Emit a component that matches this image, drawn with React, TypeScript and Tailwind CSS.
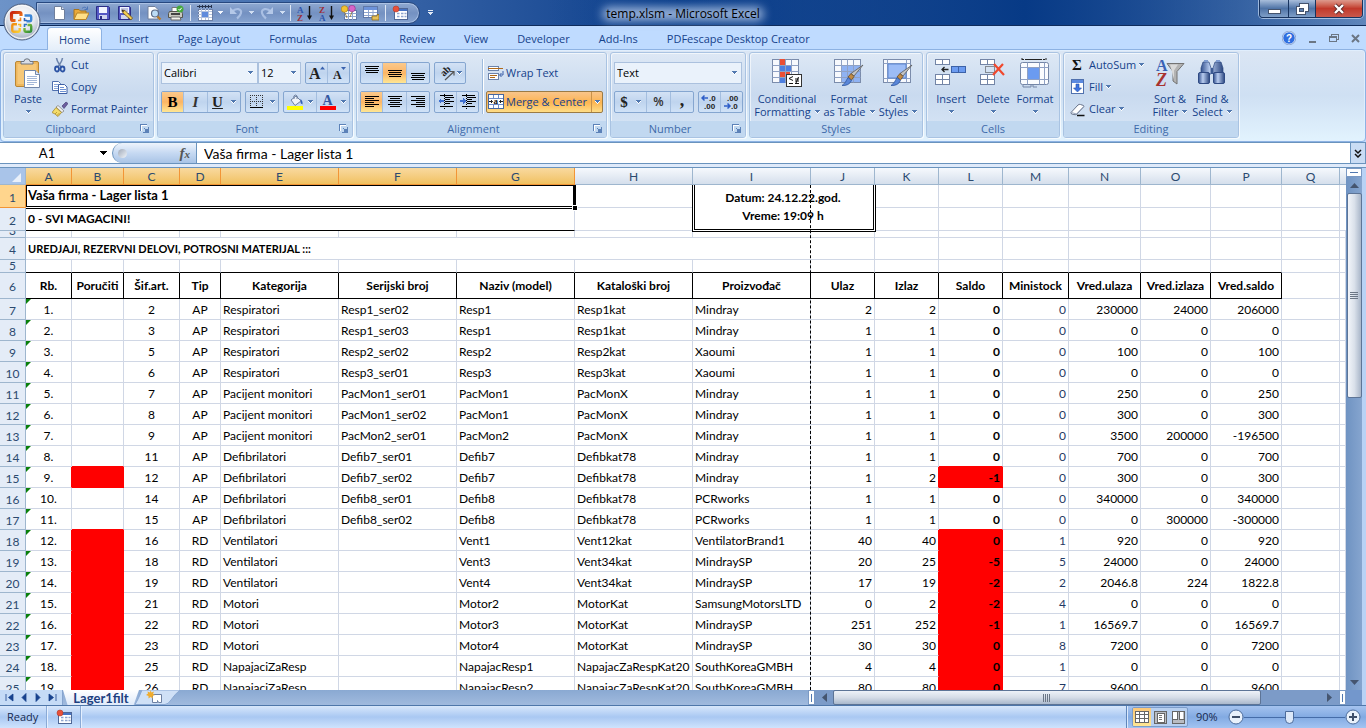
import React, { useState } from "react";
import type { ReactNode } from "react";

/* ---------- icons ---------- */

type SvgProps = { w?: number; h?: number; vb?: string; crisp?: boolean; children: ReactNode };

function Svg({ w = 16, h = 16, vb, crisp, children }: SvgProps) {
  return (
    <svg
      width={w}
      height={h}
      viewBox={vb ?? `0 0 ${w} ${h}`}
      fill="none"
      shapeRendering={crisp ? "crispEdges" : "auto"}
      className="block shrink-0"
      aria-hidden="true"
    >
      {children}
    </svg>
  );
}

function Arrow({ color = "#5279b0", shadow = true }: { color?: string; shadow?: boolean }) {
  return (
    <Svg w={5} h={4} crisp>
      {shadow && <path d="M0 1h5v1h-1v1h-1v1h-1v-1h-1v-1h-1z" fill="#fff" />}
      <path d="M0 0h5v1h-1v1h-1v1h-1v-1h-1v-1h-1z" fill={color} />
    </Svg>
  );
}

const NewIcon = () => (
  <Svg>
    <path d="M3.500 1.500h7l3 3v10h-10z" fill="#fff" stroke="#6f7f9c" />
    <path d="M10.500 1.500v3h3" fill="#dfe6f2" stroke="#6f7f9c" />
  </Svg>
);
const OpenIcon = () => (
  <Svg>
    <path d="M1 14V4.500h5l1.500 1.500H13V14z" fill="#e9a93a" stroke="#a8741c" />
    <path d="M1 14.500 4 8h12l-3 6.500z" fill="#ffdf87" stroke="#b98426" />
    <path d="M9 3.500c2-2 4-1.500 5 .5M14.500 1.500V4.500H11.500" stroke="#4b74b8" />
  </Svg>
);
const SaveIcon = () => (
  <Svg>
    <path d="M1.500 1.500h12l1 1v12h-13z" fill="#5558c4" stroke="#2b2e86" />
    <rect x="4" y="2" width="8" height="6" fill="#f2f5ff" />
    <rect x="4" y="10" width="8" height="4" fill="#cfd4ee" />
    <rect x="5" y="11" width="2" height="3" fill="#2b2e86" />
  </Svg>
);
const SaveAsIcon = () => (
  <Svg>
    <path d="M1.500 1.500h11l1 1v12h-12z" fill="#5558c4" stroke="#2b2e86" />
    <rect x="3" y="2" width="9" height="6" fill="#f2f5ff" />
    <path d="M4 4h7M4 6h7" stroke="#8d93c9" />
    <rect x="4" y="10" width="7" height="4" fill="#cfd4ee" />
    <path d="M5 5 6 8l8 7 1.500-2L8 5.500z" fill="#f3cf54" stroke="#6b4c12" strokeWidth=".8" />
    <path d="M4.500 4.500 6 7l1.500-1z" fill="#222" />
  </Svg>
);
const PreviewIcon = () => (
  <Svg>
    <path d="M2 1.500h7l3 3v9.500h-10z" fill="#fff" stroke="#6f7f9c" />
    <circle cx="9" cy="8.500" r="3.500" fill="#bcdcf5" stroke="#5a6a86" strokeWidth="1.200" />
    <path d="m11.500 11.500 3 3" stroke="#b87c2b" strokeWidth="2.400" />
  </Svg>
);
const PrintIcon = () => (
  <Svg>
    <path d="M4 6V2.500h7V6" fill="#fff" stroke="#777" />
    <path d="M1.500 6.500h12l1 2v4h-14v-4z" fill="#c9c9c0" stroke="#55554d" />
    <path d="M3 12h9l1 3H3z" fill="#f4f4ee" stroke="#666" />
    <path d="M3 9h9" stroke="#444" strokeWidth="2" />
    <circle cx="12" cy="4" r="3.500" fill="#45a83c" />
    <path d="m10.500 4 1.200 1.300 2-2.500" stroke="#fff" />
  </Svg>
);
const SelectTableIcon = () => (
  <Svg crisp>
    <path d="M0 1h15M2 0v3M5 0v3M8 0v3M11 0v3M14 0v3" stroke="#26334d" />
    <rect x="1" y="4" width="14" height="11" fill="#fff" stroke="#6b7fa6" />
    <path d="M1 6h14M1 9h14M1 12h14M4 4v11M8 4v11M11 4v11" stroke="#b4c3de" />
    <rect x="5" y="7" width="6" height="5" fill="#5f8bdc" />
  </Svg>
);
const UndoIcon = ({ flip = false }: { flip?: boolean }) => (
  <Svg>
    <g transform={flip ? "matrix(-1 0 0 1 16 0)" : undefined}>
      <path d="M4 7c4-5 10-3 9 1-.5 2.500-2 4-4 5.500" stroke="#a9bfe3" strokeWidth="2.200" />
      <path d="M2 2v7h7z" fill="#b4c8e8" />
    </g>
  </Svg>
);
const SortIcon = ({ a, b, ca, cb }: { a: string; b: string; ca: string; cb: string }) => (
  <Svg>
    <text x="0" y="7.500" fontSize="9" fontWeight="700" fontFamily="Liberation Serif, serif" fill={ca}>{a}</text>
    <text x="0" y="15.500" fontSize="9" fontWeight="700" fontFamily="Liberation Serif, serif" fill={cb}>{b}</text>
    <path d="M12.500 1v11" stroke="#111" strokeWidth="1.400" />
    <path d="M10 10.500h5l-2.500 4.500z" fill="#111" />
  </Svg>
);
const BalloonIcon = () => (
  <Svg>
    <rect x="3.500" y="5.500" width="12" height="9" fill="#fff" stroke="#5f78a8" />
    <path d="M3.500 8.500h12M3.500 11.500h12M7.500 6v9M11.500 6v9" stroke="#8ea5cf" />
    <circle cx="3.500" cy="4" r="3.300" fill="#f1c232" stroke="#a97b11" strokeWidth=".6" />
    <circle cx="11" cy="3.500" r="3.300" fill="#d764c8" stroke="#8c2d82" strokeWidth=".6" />
    <path d="m4 8 2 5M11 7l-2 5" stroke="#8a6b22" strokeWidth=".8" />
  </Svg>
);
const SheetIcon = () => (
  <Svg>
    <rect x=".5" y="1.500" width="14" height="11" fill="#fff" stroke="#5f78a8" />
    <rect x="1" y="2" width="13" height="3" fill="#6d93da" />
    <path d="M1 7.500h13M1 10.500h13M5.500 5v7M10 5v7" stroke="#8ea5cf" />
    <path d="M9 11h5v-1.500h2V15H9z" fill="#e6c15a" stroke="#8b6a1c" strokeWidth=".8" />
  </Svg>
);
const RecordIcon = () => (
  <Svg>
    <rect x="2.500" y="3.500" width="13" height="11" fill="#fff" stroke="#4f6796" />
    <rect x="3" y="4" width="12" height="2" fill="#4673c4" />
    <path d="M5 8.500h2.500M9 8.500h2.500M12.500 8.500h2M5 11.500h2.500M9 11.500h2.500M12.500 11.500h2" stroke="#8fa5cf" strokeWidth="1.500" />
    <circle cx="4" cy="4" r="3" fill="#e8503a" stroke="#b23a28" strokeWidth=".6" />
  </Svg>
);
const OfficeLogo = () => (
  <Svg w={40} h={40}>
    <defs>
      <radialGradient id="orb" cx=".5" cy=".35" r=".7">
        <stop offset="0" stopColor="#fff" />
        <stop offset=".5" stopColor="#e6e9ef" />
        <stop offset=".8" stopColor="#b4bdcd" />
        <stop offset="1" stopColor="#eef2f8" />
      </radialGradient>
      <linearGradient id="lr" x2="1" y2="1"><stop stopColor="#c8220e" /><stop offset="1" stopColor="#f58a1e" /></linearGradient>
      <linearGradient id="ly" x2="1" y2="1"><stop stopColor="#f08a12" /><stop offset="1" stopColor="#fbd032" /></linearGradient>
      <linearGradient id="lg" x2="1" y2="1"><stop stopColor="#8cc63a" /><stop offset="1" stopColor="#2f8f3a" /></linearGradient>
    </defs>
    <circle cx="20" cy="20" r="18" fill="url(#orb)" stroke="#4c5f80" />
    <circle cx="20" cy="20" r="16.500" stroke="#fff" strokeOpacity=".8" />
    <path d="M13.500 18.500H11q-1.500 0-1.500-1.500v-5q0-1.500 1.500-1.500h6.500q1.500 0 1.500 1.500v2" stroke="url(#lr)" strokeWidth="3.200" />
    <path d="M22.500 13.500h5.500q1.200 0 1.200 1.200v3.300q0 1.200-1.200 1.200h-3.500" stroke="#3d86d6" strokeWidth="2.400" />
    <path d="M15 22.200h-3.500q-1.200 0-1.200 1.200v5.200q0 1.200 1.200 1.200h5q1.200 0 1.200-1.200V26" stroke="url(#ly)" strokeWidth="2.400" />
    <path d="M22.500 26v2.500q0 1.200 1.200 1.200h4.300q1.200 0 1.200-1.200v-4.300q0-1.200-1.200-1.200h-2.500" stroke="url(#lg)" strokeWidth="2.400" />
    <path d="M18.500 15.500v3h-2.500" stroke="#f5861e" strokeWidth="1.600" />
    <path d="M22.500 16v2.500h2.500" stroke="#2b62b8" strokeWidth="1.600" />
    <path d="M16 22.500h2.500v2.500" stroke="#f5b623" strokeWidth="1.600" />
    <path d="M25 22.500h-2.500v2.500" stroke="#2d74c4" strokeWidth="1.600" />
  </Svg>
);

const PasteIcon = () => (
  <Svg w={28} h={32}>
    <rect x="1.500" y="3.500" width="23" height="25" rx="1.500" fill="#efb75c" stroke="#b98634" />
    <rect x="3.500" y="6" width="19" height="20" fill="#f6c878" />
    <path d="M7 6V3.500h3Q10 .8 13 .8t3 2.700h3V6z" fill="#d9dee6" stroke="#6c7480" />
    <path d="M10.500 12.500h11l4 4v13h-15z" fill="#fff" stroke="#7187ab" />
    <path d="M21.500 12.500v4h4" fill="#dfe8f6" stroke="#7187ab" />
    <path d="M13 18.500h10M13 20.500h10M13 22.500h10M13 24.500h10M13 26.500h7" stroke="#a3b7d8" />
  </Svg>
);
const CutIcon = () => (
  <Svg>
    <path d="M4.500 1c.5 4 3 6 4.500 9M10.500 1C10 5 7.500 7 6 10" stroke="#6f86ad" strokeWidth="1.600" />
    <ellipse cx="5" cy="12" rx="2" ry="2.500" stroke="#2c53a4" strokeWidth="1.800" />
    <ellipse cx="10.500" cy="12" rx="2" ry="2.500" stroke="#2c53a4" strokeWidth="1.800" />
  </Svg>
);
const CopyIcon = () => (
  <Svg>
    <path d="M.5 2.500h6l2 2v7h-8z" fill="#fff" stroke="#4f6fae" />
    <path d="M2 5.500h4M2 7.500h4M2 9.500h4" stroke="#8ba7da" />
    <path d="M6.500 5.500h6l2.500 2.500v6.500h-8.500z" fill="#fff" stroke="#3d5fa5" />
    <path d="M8 8.500h4M8 10.500h6M8 12.500h6" stroke="#6f92d3" />
  </Svg>
);
const PainterIcon = () => (
  <Svg>
    <path d="m10 5 4-4 2 1.500-4 5z" fill="#6d5e9e" stroke="#3d356b" strokeWidth=".6" />
    <path d="m6 4.500 6 5.500-2 1.500-6-5.500z" fill="#f2f2f2" stroke="#7a7a7a" strokeWidth=".7" />
    <path d="M4 6.500 9.500 11.500 6 15.500Q3 12.500 0 11.500z" fill="#f4dc6a" stroke="#9b7c22" strokeWidth=".7" />
    <path d="m3 13 2-2M5 14.500 7.500 12" stroke="#a88723" strokeWidth=".7" />
  </Svg>
);
const GrowIcon = ({ small = false }: { small?: boolean }) => (
  <Svg w={18}>
    <text x={small ? 3 : 1} y="14" fontSize={small ? 12 : 16} fontWeight="700" fontFamily="Liberation Serif, serif" fill="#222">A</text>
    <path d={small ? "M11 2h5l-2.500 3z" : "M12 4.500h5l-2.500-3z"} fill="#3a62ae" />
  </Svg>
);
const BordersIcon = () => (
  <Svg crisp w={14} h={14}>
    <path d="M.5 0v12M6.500 0v12M12.500 0v12M0 .5h13M0 6.500h13" stroke="#333" strokeDasharray="1 1" />
    <path d="M0 12.500h13" stroke="#000" strokeWidth="1" />
  </Svg>
);
const FillIcon = () => (
  <Svg w={17}>
    <path d="m4 6 5-4 5 5-6 4.500z" fill="#eef2f8" stroke="#6d7f9e" />
    <path d="M7 5q-1-4 1.500-4T10 5" stroke="#6d7f9e" />
    <path d="M13 5q3 1 2.500 5.500Q12.500 9 14 7z" fill="#2f5fb8" />
    <rect x="0" y="12" width="16" height="4" fill="#ff0" />
  </Svg>
);
const FontColorIcon = () => (
  <Svg w={17}>
    <text x="2.500" y="11" fontSize="14" fontWeight="700" fontFamily="Liberation Serif, serif" fill="#34579f">A</text>
    <rect x="0" y="12" width="16" height="4" fill="#f00" />
  </Svg>
);

function Lines({ rows }: { rows: [number, number, number][] }) {
  return (
    <Svg crisp>
      {rows.map(([y, x, w]) => (
        <rect key={y} x={x} y={y} width={w} height={1} fill="#000" />
      ))}
    </Svg>
  );
}
const TopIcon = () => <Lines rows={[[1, 1, 14], [3, 2, 12], [5, 1, 14], [7, 2, 12]]} />;
const MiddleIcon = () => <Lines rows={[[5, 1, 14], [7, 2, 12], [9, 1, 14], [11, 2, 12]]} />;
const BottomIcon = () => <Lines rows={[[8, 1, 14], [10, 2, 12], [12, 1, 14], [14, 2, 12]]} />;
const LeftIcon = () => <Lines rows={[[2, 1, 14], [4, 1, 9], [6, 1, 14], [8, 1, 9], [10, 1, 14], [12, 1, 9]]} />;
const CenterIcon = () => <Lines rows={[[2, 1, 14], [4, 3, 10], [6, 1, 14], [8, 3, 10], [10, 1, 14], [12, 3, 10]]} />;
const RightIcon = () => <Lines rows={[[2, 1, 14], [4, 6, 9], [6, 1, 14], [8, 6, 9], [10, 1, 14], [12, 6, 9]]} />;
const IndentIcon = ({ out = false }: { out?: boolean }) => (
  <Svg crisp>
    <path d="M7 3.500h9M7 5.500h5M7 7.500h9M7 9.500h5M2 12.500h13M2 1.500h13" stroke="#000" />
    <path d="M6.500 0v16" stroke="#000" strokeDasharray="1 1" />
    <path d={out ? "M0 7 3 4v2h3v2H3v2z" : "M6 7 3 4v2H0v2h3v2z"} fill="#3f6fd0" />
  </Svg>
);
const OrientIcon = () => (
  <Svg>
    <text x="0" y="0" fontSize="10" fontWeight="700" fontFamily="Liberation Serif, serif" fill="#222" transform="translate(5 12) rotate(-45)">ab</text>
    <path d="m6 15 8.500-8M11 6.500H15V10.500" stroke="#555" strokeWidth="1.200" />
  </Svg>
);
const WrapIcon = () => (
  <Svg>
    <rect x=".5" y="1.500" width="10" height="4" fill="#fff" stroke="#6c83ab" />
    <path d="M0 3.500h15" stroke="#b06a1a" strokeWidth="1.200" />
    <rect x=".5" y="8.500" width="10" height="6" fill="#fff" stroke="#6c83ab" />
    <path d="M2 10.500h7M2 12.500h5" stroke="#b06a1a" />
    <path d="M15 6v4h-3M13.500 8 11.500 10l2 2" stroke="#3a5fa8" />
  </Svg>
);
const MergeIcon = () => (
  <Svg>
    <rect x=".5" y=".5" width="15" height="14" fill="#fff" stroke="#47679f" />
    <path d="M1 4.500h14M1 10.500h14M5.500 1v3M10.500 1v3M5.500 11v3M10.500 11v3" stroke="#6d8dc9" />
    <path d="M1 7.500h3.500M11.500 7.500H15M3 6l1.500 1.500L3 9M13 6l-1.500 1.500L13 9" stroke="#222" />
    <text x="5.500" y="10" fontSize="9" fontWeight="700" fontFamily="Liberation Serif, serif" fill="#111">a</text>
  </Svg>
);
const DecimalIcon = ({ dec = false }: { dec?: boolean }) => (
  <Svg w={17}>
    <text x={dec ? 4 : 8} y="7" fontSize="8" fontWeight="700" fontFamily="Liberation Sans, sans-serif" fill="#222">{dec ? ".00" : ".0"}</text>
    <text x={dec ? 8 : 3} y="15" fontSize="8" fontWeight="700" fontFamily="Liberation Sans, sans-serif" fill="#222">{dec ? ".0" : ".00"}</text>
    <path d={dec ? "M1 12h6M4.500 9.500 7 12l-2.500 2.500" : "M7 4H1M3.500 1.500 1 4l2.500 2.500"} stroke="#2f5fc8" strokeWidth="1.500" />
  </Svg>
);

const Grid = ({ children }: { children?: ReactNode }) => (
  <>
    <rect x="1.500" y="1.500" width="26" height="23" fill="#f7f9fd" stroke="#7b8cab" />
    {children}
    <path d="M1.500 7.500h26M1.500 13.500h26M1.500 19.500h26M8.500 1.500v23M14.500 1.500v23M20.500 1.500v23" stroke="#8fa1c4" />
  </>
);
const Brush = () => (
  <g>
    <path d="m30 7-9 11-3-2.500z" fill="#c4c4c4" stroke="#5c5c5c" strokeWidth=".8" />
    <path d="m18 15.500 3 3-2.500 3.500-3.500-3z" fill="#c08a45" stroke="#6d4b1d" strokeWidth=".8" />
    <path d="M15 19.500 18.500 22.500Q16 28 9 27.500q3.500-2 6-8z" fill="#5a86d8" stroke="#2c559f" strokeWidth=".8" />
  </g>
);
const CondIcon = () => (
  <Svg w={32} h={32}>
    <Grid>
      <rect x="8" y="1" width="6" height="6" fill="#ea4f35" />
      <rect x="8" y="8" width="12" height="6" fill="#4d7fe0" />
      <rect x="8" y="14" width="11" height="6" fill="#ea4f35" />
      <rect x="8" y="20" width="6" height="5" fill="#4d7fe0" />
    </Grid>
    <rect x="15.500" y="16.500" width="15" height="12" fill="#fff" stroke="#333" />
    <path d="m22 18.500-4 2 4 2M18 25.500h4M24 21h4M24 23h4M27.500 19 25 25M24 25.500h4" stroke="#111" />
  </Svg>
);
const FormatTableIcon = () => (
  <Svg w={32} h={32}>
    <Grid>
      <rect x="8" y="8" width="19" height="16" fill="#8fb2f3" />
    </Grid>
    <Brush />
  </Svg>
);
const CellStylesIcon = () => (
  <Svg w={32} h={32}>
    <rect x="1.500" y="1.500" width="27" height="23" fill="#f7f9fd" stroke="#7b8cab" />
    <path d="M1.500 5.500h27M1.500 20.500h27M5.500 1.500v23M24.500 1.500v23" stroke="#8fa1c4" />
    <rect x="6" y="6" width="18" height="14" fill="#9cbcf6" stroke="#5d86cf" />
    <Brush />
  </Svg>
);
const CellBlock = ({ x, y, h = 11 }: { x: number; y: number; h?: number }) => (
  <g stroke="#7385a6">
    <rect x={x} y={y} width="14" height={h} fill="#fff" />
    <path d={h > 6 ? `M${x + 7} ${y}v${h}M${x} ${y + 5}h14` : `M${x + 7} ${y}v${h}`} />
  </g>
);
const InsertIcon = () => (
  <Svg w={32} h={32}>
    <CellBlock x={0.5} y={1.5} h={5} />
    <CellBlock x={0.5} y={16.5} h={10} />
    <rect x="16.500" y="8.500" width="14" height="6" fill="#6b9bf0" stroke="#3c62a8" />
    <path d="M23.500 8.500v6" stroke="#3c62a8" />
    <path d="M13.500 11.500H7M9.500 9 7 11.500 9.500 14" stroke="#222" strokeWidth="1.300" />
  </Svg>
);
const DeleteIcon = () => (
  <Svg w={32} h={32}>
    <CellBlock x={3.5} y={1.5} h={5} />
    <CellBlock x={3.5} y={16.5} h={10} />
    <path d="M8.500 8.500h9v6h-9z" stroke="#333" strokeDasharray="1 1" />
    <path d="m17 6 10 11M26 6 16 17" stroke="#f0492e" strokeWidth="2.200" />
  </Svg>
);
const FormatIcon = () => (
  <Svg w={32} h={32}>
    <path d="M3 1.500h24M3 0v3M27 0v3" stroke="#222" strokeDasharray="2 1" />
    <path d="M8 1.500h14" stroke="#222" />
    <rect x="1.500" y="4.500" width="28" height="22" rx="2" fill="#fafcff" stroke="#7385a6" />
    <path d="M1.500 9.500h28M1.500 21.500h28M8.500 4.500v22M20.500 4.500v22M25.500 4.500v22" stroke="#8fa1c4" />
    <rect x="9" y="10" width="11" height="11" fill="#6b9bf0" />
    <path d="M4 27v2h8v-2M14 27v2h4" stroke="#7385a6" />
  </Svg>
);
const SigmaIcon = () => (
  <Svg>
    <text x="2" y="13" fontSize="15" fontWeight="700" fontFamily="Liberation Serif, serif" fill="#111">Σ</text>
  </Svg>
);
const FillDownIcon = () => (
  <Svg>
    <rect x="1.500" y=".5" width="12" height="14" fill="#fff" stroke="#5071ae" />
    <rect x="2" y="1" width="11" height="3" fill="#5c8ae0" />
    <path d="M6 5h3v4h2.500L7.500 13 3.500 9H6z" fill="#3d73e0" stroke="#2550a8" strokeWidth=".6" />
  </Svg>
);
const EraserIcon = () => (
  <Svg>
    <path d="M1 11.500 8 4q1-1 2.500-.5l3 1q1 .5 0 1.500L7 13q-1 1-2 .7L1.500 13z" fill="#fff" stroke="#68748c" />
    <path d="m1.500 11.500 5 1.500 7-7.500" stroke="#9aa6bd" />
    <path d="M7 14.500h7.500" stroke="#111" strokeWidth="1.500" />
  </Svg>
);
const SortFilterIcon = () => (
  <Svg w={32} h={32}>
    <path d="M13 5.500h17l-7 8v12.500l-4-3v-9.500z" fill="#b3b3b3" stroke="#737373" />
    <path d="M16 6.500h8l-4 6v9" fill="#d9d9d9" />
    <text x="2" y="13" fontSize="16" fontWeight="700" fontFamily="Liberation Serif, serif" fill="#3a62b4">A</text>
    <text x="2" y="28" fontSize="18" fontWeight="700" fontStyle="italic" fontFamily="Liberation Serif, serif" fill="#a8332f">Z</text>
  </Svg>
);
const FindIcon = () => (
  <Svg w={32} h={32}>
    <defs>
      <linearGradient id="bino"><stop stopColor="#33518f" /><stop offset=".4" stopColor="#b9cdf0" /><stop offset="1" stopColor="#2c4780" /></linearGradient>
    </defs>
    <rect x="13" y="10" width="6" height="6" fill="#45649f" />
    <path d="M7 4h6l2 6v6H5v-6zM19 4h6l2 6v6H17v-6z" fill="url(#bino)" stroke="#2f4a83" strokeWidth=".7" />
    <path d="M8 2h4v2H8zM20 2h4v2h-4z" fill="#7f9cd0" />
    <rect x="2.500" y="14.500" width="11" height="11" rx="1.500" fill="url(#bino)" stroke="#2f4a83" />
    <rect x="17.500" y="14.500" width="11" height="11" rx="1.500" fill="url(#bino)" stroke="#2f4a83" />
  </Svg>
);
const LauncherIcon = () => (
  <Svg w={9} h={9} crisp>
    <path d="M0 .5h7M.5 0v7" stroke="#5c82b8" />
    <path d="M1 1.500h6M1.500 1v6" stroke="#fff" />
    <path d="M8.500 3v6M3 8.500h6M4 4l3 3" stroke="#5c82b8" />
    <rect x="5" y="5" width="3" height="3" fill="#5c82b8" />
  </Svg>
);

/* ---------- ribbon parts ---------- */

function Group({ title, launcher, className, children }: { title: string; launcher?: boolean; className: string; children: ReactNode }) {
  return (
    <section
      aria-label={title}
      className={`flex h-[86px] shrink-0 flex-col rounded-[3px] border border-[#a9c3e2] bg-linear-to-b from-[#dde8f5] via-[#c9daef] to-[#d8e6f6] shadow-[inset_1px_1px_0_rgba(255,255,255,.6),1px_1px_0_rgba(255,255,255,.7)] ${className}`}
    >
      <div className="flex min-h-0 flex-1 px-[3px]">{children}</div>
      <div className="relative flex h-4 shrink-0 items-center justify-center rounded-b-[2px] bg-[#c1d8f0] pr-4 text-[#3e6aaa]">
        <span className={launcher ? "" : "pl-4"}>{title}</span>
        {launcher && (
          <button aria-label={`${title} options`} className="absolute top-[3px] right-1">
            <LauncherIcon />
          </button>
        )}
      </div>
    </section>
  );
}

function Big({ icon, lines, className }: { icon: ReactNode; lines: [string, string?]; className: string }) {
  return (
    <button className={`flex flex-col items-center pt-[5px] leading-[13px] whitespace-nowrap ${className}`}>
      <span className="mb-[2px] flex h-8 items-center">{icon}</span>
      <span>{lines[0]}</span>
      <span className="flex h-[13px] items-center gap-1">
        {lines[1]}
        <Arrow />
      </span>
    </button>
  );
}

function Small({ icon, label, arrow }: { icon: ReactNode; label: string; arrow?: boolean }) {
  return (
    <button className="flex h-[22px] items-center gap-[3px] whitespace-nowrap">
      {icon}
      <span>{label}</span>
      {arrow && <Arrow />}
    </button>
  );
}

function Bar({ children }: { children: ReactNode }) {
  return (
    <div className="flex h-[22px] divide-x divide-[#a4bedf] rounded-[2px] border border-[#85a6d0] bg-linear-to-b from-[#d3e2f5] via-[#bfd4ee] to-[#d0e2f7]">
      {children}
    </div>
  );
}

function Tool({ label, on, className, children }: { label: string; on?: boolean; className: string; children: ReactNode }) {
  return (
    <button
      aria-label={label}
      aria-pressed={on}
      className={`flex items-center justify-center ${on ? "bg-linear-to-b from-[#fbc98b] via-[#fbb565] to-[#fee693]" : ""} ${className}`}
    >
      {children}
    </button>
  );
}

function Combo({ label, value, options, className }: { label: string; value: string; options: string[]; className: string }) {
  return (
    <div className={`relative h-[22px] border border-[#abc1de] bg-[#eaf2fb] ${className}`}>
      <select
        aria-label={label}
        defaultValue={value}
        className="h-full w-full appearance-none bg-transparent pl-[2px] text-[11px] text-black outline-none"
      >
        {options.map((o) => (
          <option key={o}>{o}</option>
        ))}
      </select>
      <span className="pointer-events-none absolute top-2 right-1">
        <Arrow />
      </span>
    </div>
  );
}

const TABS = ["Home", "Insert", "Page Layout", "Formulas", "Data", "Review", "View", "Developer", "Add-Ins", "PDFescape Desktop Creator"];

function Qat() {
  const b = (label: string, icon: ReactNode) => (
    <button aria-label={label} className="flex w-[22px] justify-center">{icon}</button>
  );
  const arrow = (label: string, color = "#f4f8ff") => (
    <button aria-label={label} className="flex w-[9px] justify-center">
      <Arrow color={color} shadow={false} />
    </button>
  );
  const sep = <span className="mx-[3px] h-4 w-px bg-[#dfe8f5]" />;
  return (
    <div className="flex h-[22px] items-center rounded-r-[11px] border border-[#27487f] bg-linear-to-b from-[#8fa9d1] via-[#7491c1] to-[#87a4d0] pr-2 pl-[11px] shadow-[inset_0_0_0_1px_rgba(190,210,240,.6)]">
      {b("New", <NewIcon />)}
      {b("Open", <OpenIcon />)}
      {b("Save", <SaveIcon />)}
      {b("Save As", <SaveAsIcon />)}
      {sep}
      {b("Print Preview", <PreviewIcon />)}
      {b("Quick Print", <PrintIcon />)}
      {sep}
      {b("Table", <SelectTableIcon />)}
      {arrow("Table options")}
      {b("Undo", <UndoIcon />)}
      {arrow("Undo history", "#d0def2")}
      {b("Redo", <UndoIcon flip />)}
      {arrow("Redo history", "#d0def2")}
      {sep}
      {b("Sort A to Z", <SortIcon a="A" b="Z" ca="#2d54ab" cb="#9c2f38" />)}
      {b("Sort Z to A", <SortIcon a="Z" b="A" ca="#9c2f38" cb="#2d54ab" />)}
      {b("Custom views", <BalloonIcon />)}
      {b("Table view", <SheetIcon />)}
      {sep}
      {b("Record Macro", <RecordIcon />)}
    </div>
  );
}

function TitleBar() {
  return (
    <header className="relative flex h-[26px] shrink-0 items-center border-b border-[#0f2c5c] bg-linear-to-r from-[#6d93c8] from-0% via-[#0a3f8c] via-50% to-[#5f86bb] pl-9">
      <div className="absolute inset-0 bg-linear-to-r from-transparent from-40% via-[#073a86] via-75% to-transparent" />
      <div className="relative flex items-center gap-2">
        <Qat />
        <button aria-label="Customize toolbar" className="flex flex-col items-center gap-px">
          <span className="h-px w-[5px] bg-[#dfe8f5]" />
          <Arrow color="#dfe8f5" shadow={false} />
        </button>
      </div>
      <h1 className="pointer-events-none absolute inset-x-0 top-[5px] flex justify-center text-[12px] leading-[18px] text-black">
        <span className="relative">
          <span className="absolute inset-x-[-4px] top-[2px] bottom-[2px] rounded-full bg-[#c4d6f0]/75 blur-[5px]" />
          <span className="relative">temp.xlsm - Microsoft Excel</span>
        </span>
      </h1>
      <div className="absolute top-0 right-[3px] flex h-[18px] overflow-hidden rounded-b-[4px] border border-t-0 border-[#17335f] shadow-[0_0_0_1px_rgba(200,220,245,.7)]">
        <button aria-label="Minimize" className="flex w-[29px] items-center justify-center border-r border-[#17335f] bg-linear-to-b from-[#a9bedb] via-[#4f73a6] to-[#7f9fc8]">
          <Svg w={14} h={14} crisp><rect x="1" y="7" width="12" height="4" fill="#fff" stroke="#44536d" /></Svg>
        </button>
        <button aria-label="Restore" className="flex w-[27px] items-center justify-center border-r border-[#17335f] bg-linear-to-b from-[#a9bedb] via-[#4f73a6] to-[#7f9fc8]">
          <Svg w={14} h={14} crisp>
            <path d="M4 1h9v8h-3v3H1V4h3z" fill="#fff" stroke="#44536d" />
            <rect x="4" y="6" width="4" height="3" fill="#5c7fb0" stroke="#44536d" />
          </Svg>
        </button>
        <button aria-label="Close" className="flex w-[46px] items-center justify-center bg-linear-to-b from-[#dd9a8d] via-[#c1392b] to-[#c9584c]">
          <Svg w={14} h={14}>
            <path d="m3 3 8 8M11 3l-8 8" stroke="#5c2a2a" strokeWidth="4" />
            <path d="m3 3 8 8M11 3l-8 8" stroke="#fff" strokeWidth="2.400" />
          </Svg>
        </button>
      </div>
      <button aria-label="Office Button" className="absolute top-[2px] left-[2px] z-10">
        <OfficeLogo />
      </button>
    </header>
  );
}

function TabRow() {
  return (
    <nav className="flex h-[23px] shrink-0 items-stretch gap-[5px] bg-[#bfdbff] pt-px pl-[47px] text-[11px] text-[#15428b]">
      {TABS.map((t, i) => (
        <a
          key={t}
          href={`#${t.replace(/\s/g, "-")}`}
          className={`flex items-center rounded-t-[4px] px-[11px] pt-[2px] whitespace-nowrap ${
            i === 0 ? "z-10 -mb-px border border-b-0 border-[#8db2e3] bg-linear-to-b from-white to-[#e4eef9]" : "border border-transparent"
          }`}
        >
          {t}
        </a>
      ))}
      <div className="ml-auto flex items-center gap-3 pr-[6px]">
        <button aria-label="Help">
          <Svg w={14} h={14}>
            <circle cx="7" cy="7" r="6.300" fill="#2f6ee0" stroke="#fff" strokeWidth="1" />
            <circle cx="7" cy="7" r="6.800" stroke="#4a6da8" strokeWidth=".5" />
            <text x="4" y="10.500" fontSize="10" fontWeight="700" fontFamily="Liberation Sans, sans-serif" fill="#fff">?</text>
          </Svg>
        </button>
        <button aria-label="Minimize workbook"><Svg w={9} h={9} crisp><rect x="1" y="7" width="7" height="2" fill="#6b7684" /></Svg></button>
        <button aria-label="Restore workbook">
          <Svg w={10} h={9} crisp><path d="M2.500 2V.5h7v5H8" stroke="#6b7684" /><rect x=".5" y="2.500" width="7" height="5" stroke="#6b7684" /><path d="M0 3h8" stroke="#6b7684" strokeWidth="2" /></Svg>
        </button>
        <button aria-label="Close workbook"><Svg w={9} h={9}><path d="m1 1 7 7M8 1 1 8" stroke="#6b7684" strokeWidth="2" /></Svg></button>
      </div>
    </nav>
  );
}

function Ribbon() {
  return (
    <div className="flex h-[93px] shrink-0 gap-[3px] overflow-hidden rounded-[4px] border border-[#8db2e3] bg-linear-to-b from-[#dbe6f4] via-[#cfe0f3] to-[#e2f3fe] px-[2px] pt-[2px] text-[11px] text-[#15428b] shadow-[inset_0_0_0_1px_rgba(225,240,255,.8)]">
      <Group title="Clipboard" launcher className="w-[151px]">
        <Big icon={<PasteIcon />} lines={["Paste"]} className="w-[42px]" />
        <div className="flex flex-col items-start pt-[1px] pl-[3px]">
          <Small icon={<CutIcon />} label="Cut" />
          <Small icon={<CopyIcon />} label="Copy" />
          <Small icon={<PainterIcon />} label="Format Painter" />
        </div>
      </Group>

      <Group title="Font" launcher className="w-[196px]">
        <div className="flex flex-col gap-[7px] pt-[9px]">
          <div className="flex">
            <Combo label="Font name" value="Calibri" options={["Calibri", "Cambria", "Arial"]} className="w-[97px]" />
            <Combo label="Font size" value="12" options={["10", "11", "12", "14"]} className="mr-1 w-[43px]" />
            <Bar>
              <Tool label="Grow font" className="w-[22px]"><GrowIcon /></Tool>
              <Tool label="Shrink font" className="w-[21px]"><GrowIcon small /></Tool>
            </Bar>
          </div>
          <div className="flex gap-1">
            <Bar>
              <Tool label="Bold" on className="w-[22px] font-['Liberation_Serif',serif] text-[15px] leading-none font-bold text-black">B</Tool>
              <Tool label="Italic" className="w-6 font-['Liberation_Serif',serif] text-[15px] leading-none font-bold text-[#333] italic">I</Tool>
              <Tool label="Underline" className="w-[32px] gap-2 font-['Liberation_Serif',serif] text-[15px] leading-none font-bold text-[#222]">
                <span className="underline">U</span><Arrow />
              </Tool>
            </Bar>
            <Bar>
              <Tool label="Borders" className="w-8 gap-[6px]"><BordersIcon /><Arrow /></Tool>
            </Bar>
            <Bar>
              <Tool label="Fill colour" className="w-[33px] gap-1"><FillIcon /><Arrow /></Tool>
              <Tool label="Font colour" className="w-[32px] gap-1"><FontColorIcon /><Arrow /></Tool>
            </Bar>
          </div>
        </div>
      </Group>

      <Group title="Alignment" launcher className="w-[251px]">
        <div className="flex flex-col gap-[7px] pt-[9px]">
          <div className="flex gap-1">
            <Bar>
              <Tool label="Top align" className="w-[22px]"><TopIcon /></Tool>
              <Tool label="Middle align" on className="w-6"><MiddleIcon /></Tool>
              <Tool label="Bottom align" className="w-[22px]"><BottomIcon /></Tool>
            </Bar>
            <Bar>
              <Tool label="Orientation" className="w-[30px] gap-[2px]"><OrientIcon /><Arrow /></Tool>
            </Bar>
          </div>
          <div className="flex gap-1">
            <Bar>
              <Tool label="Align left" on className="w-[22px]"><LeftIcon /></Tool>
              <Tool label="Align centre" className="w-6"><CenterIcon /></Tool>
              <Tool label="Align right" className="w-[22px]"><RightIcon /></Tool>
            </Bar>
            <Bar>
              <Tool label="Decrease indent" className="w-[22px]"><IndentIcon out /></Tool>
              <Tool label="Increase indent" className="w-[21px]"><IndentIcon /></Tool>
            </Bar>
          </div>
        </div>
        <div className="mx-[3px] mt-[6px] h-[55px] w-px bg-[#9ebbdd] shadow-[1px_0_0_#fff]" />
        <div className="flex flex-1 flex-col gap-[7px] pt-[9px]">
          <button className="flex h-[22px] items-center gap-[2px] px-[2px]">
            <WrapIcon /> Wrap Text
          </button>
          <div className="flex h-[22px] rounded-[2px] border border-[#9b7b45] bg-linear-to-b from-[#f9c58a] via-[#fcb450] to-[#fedd86]">
            <button aria-pressed="true" className="flex flex-1 items-center gap-[2px] pl-px whitespace-nowrap">
              <MergeIcon /> Merge &amp; Center
            </button>
            <button aria-label="Merge options" className="flex w-[11px] items-center justify-center border-l border-[#c9924a]"><Arrow /></button>
          </div>
        </div>
      </Group>

      <Group title="Number" launcher className="w-[136px]">
        <div className="flex flex-col gap-[7px] pt-[9px]">
          <Combo label="Number format" value="Text" options={["General", "Number", "Text"]} className="w-[128px]" />
          <div className="flex gap-1">
            <Bar>
              <Tool label="Accounting format" className="w-8 gap-2 font-['Liberation_Serif',serif] text-[15px] leading-none font-bold text-[#222]">$<Arrow /></Tool>
              <Tool label="Percent" className="w-6 text-[12px] font-semibold text-[#333]">%</Tool>
              <Tool label="Comma" className="w-[22px] pb-1 font-['Liberation_Serif',serif] text-[18px] leading-none font-bold text-[#222]">,</Tool>
            </Bar>
            <Bar>
              <Tool label="Increase decimal" className="w-[22px]"><DecimalIcon /></Tool>
              <Tool label="Decrease decimal" className="w-[21px]"><DecimalIcon dec /></Tool>
            </Bar>
          </div>
        </div>
      </Group>

      <Group title="Styles" className="w-[174px]">
        <Big icon={<CondIcon />} lines={["Conditional", "Formatting"]} className="w-[68px]" />
        <Big icon={<FormatTableIcon />} lines={["Format", "as Table"]} className="w-[56px]" />
        <Big icon={<CellStylesIcon />} lines={["Cell", "Styles"]} className="w-[42px]" />
      </Group>

      <Group title="Cells" className="w-[134px]">
        <Big icon={<InsertIcon />} lines={["Insert"]} className="w-[42px]" />
        <Big icon={<DeleteIcon />} lines={["Delete"]} className="w-[42px]" />
        <Big icon={<FormatIcon />} lines={["Format"]} className="w-[42px]" />
      </Group>

      <Group title="Editing" className="w-[176px]">
        <div className="flex w-[82px] flex-col items-start pt-[1px] pl-[3px]">
          <Small icon={<SigmaIcon />} label="AutoSum" arrow />
          <Small icon={<FillDownIcon />} label="Fill" arrow />
          <Small icon={<EraserIcon />} label="Clear" arrow />
        </div>
        <Big icon={<SortFilterIcon />} lines={["Sort &", "Filter"]} className="w-[42px]" />
        <Big icon={<FindIcon />} lines={["Find &", "Select"]} className="w-[42px]" />
      </Group>
    </div>
  );
}

function FormulaBar() {
  return (
    <div className="flex h-[22px] shrink-0 border-y border-[#6a93bd] bg-white font-[Lato,sans-serif] text-black">
      <input aria-label="Name box" defaultValue="A1" className="w-[94px] pt-px text-center text-[13px] outline-none" />
      <button aria-label="Named cells" className="flex w-[18px] items-center justify-center">
        <Svg w={7} h={4} crisp><path d="M0 0h7v1h-1v1h-1v1h-1v1h-1v-1h-1v-1h-1v-1h-1z" fill="#000" /></Svg>
      </button>
      <div className="flex w-[84px] items-center justify-between rounded-l-full border-l border-[#6a93bd] bg-linear-to-b from-[#eef4fc] via-[#c6d9f2] to-[#a9c4e6] pr-[6px] pl-[5px]">
        <span className="h-[9px] w-[9px] rounded-full bg-linear-to-br from-[#9fa9b8] to-[#f2f6fb]" />
        <button aria-label="Insert function" className="font-['Liberation_Serif',serif] text-[15px] leading-none font-bold text-[#555] italic">
          f<span className="text-[11px]">x</span>
        </button>
      </div>
      <input
        aria-label="Formula"
        defaultValue="Vaša firma - Lager lista 1"
        className="min-w-0 flex-1 border-l border-[#6a93bd] pl-[7px] text-[14px] outline-none"
      />
      <button aria-label="Expand formula bar" className="flex w-4 items-center justify-center border border-y-0 border-[#6a93bd] bg-[#c9dcf4]">
        <Svg w={8} h={9}><path d="m1 1 3 3 3-3M1 5l3 3 3-3" stroke="#111" strokeWidth="1.500" /></Svg>
      </button>
    </div>
  );
}

/* ---------- sheet ---------- */

const COLS = "ABCDEFGHIJKLMNOPQ".split("");
const COL_W = ["w-[26px]", "w-[46px]", "w-[52px]", "w-[56px]", "w-[41px]", "w-[118px]", "w-[118px]", "w-[118px]", "w-[118px]", "w-[118px]", "w-[64px]", "w-[64px]", "w-[64px]", "w-[66px]", "w-[72px]", "w-[70px]", "w-[71px]", "w-[58px]"];
const HEADINGS = ["Rb.", "Poručiti", "Šif.art.", "Tip", "Kategorija", "Serijski broj", "Naziv (model)", "Kataloški broj", "Proizvođač", "Ulaz", "Izlaz", "Saldo", "Ministock", "Vred.ulaza", "Vred.izlaza", "Vred.saldo"];

const DATA: { low: boolean; v: string[] }[] = [
  "2|AP|Respiratori|Resp1_ser02|Resp1|Resp1kat|Mindray|2|2|0|0|230000|24000|206000",
  "3|AP|Respiratori|Resp1_ser03|Resp1|Resp1kat|Mindray|1|1|0|0|0|0|0",
  "5|AP|Respiratori|Resp2_ser02|Resp2|Resp2kat|Xaoumi|1|1|0|0|100|0|100",
  "6|AP|Respiratori|Resp3_ser01|Resp3|Resp3kat|Xaoumi|1|1|0|0|0|0|0",
  "7|AP|Pacijent monitori|PacMon1_ser01|PacMon1|PacMonX|Mindray|1|1|0|0|250|0|250",
  "8|AP|Pacijent monitori|PacMon1_ser02|PacMon1|PacMonX|Mindray|1|1|0|0|300|0|300",
  "9|AP|Pacijent monitori|PacMon2_ser01|PacMon2|PacMonX|Mindray|1|1|0|0|3500|200000|-196500",
  "11|AP|Defibrilatori|Defib7_ser01|Defib7|Defibkat78|Mindray|1|1|0|0|700|0|700",
  "12|AP|Defibrilatori|Defib7_ser02|Defib7|Defibkat78|Mindray|1|2|-1|0|300|0|300",
  "14|AP|Defibrilatori|Defib8_ser01|Defib8|Defibkat78|PCRworks|1|1|0|0|340000|0|340000",
  "15|AP|Defibrilatori|Defib8_ser02|Defib8|Defibkat78|PCRworks|1|1|0|0|0|300000|-300000",
  "16|RD|Ventilatori||Vent1|Vent12kat|VentilatorBrand1|40|40|0|1|920|0|920",
  "18|RD|Ventilatori||Vent3|Vent34kat|MindraySP|20|25|-5|5|24000|0|24000",
  "19|RD|Ventilatori||Vent4|Vent34kat|MindraySP|17|19|-2|2|2046.8|224|1822.8",
  "21|RD|Motori||Motor2|MotorKat|SamsungMotorsLTD|0|2|-2|4|0|0|0",
  "22|RD|Motori||Motor3|MotorKat|MindraySP|251|252|-1|1|16569.7|0|16569.7",
  "23|RD|Motori||Motor4|MotorKat|MindraySP|30|30|0|8|7200|0|7200",
  "25|RD|NapajaciZaResp||NapajacResp1|NapajacZaRespKat20|SouthKoreaGMBH|4|4|0|1|0|0|0",
  "26|RD|NapajaciZaResp||NapajacResp2|NapajacZaRespKat20|SouthKoreaGMBH|80|80|0|7|9600|0|9600",
].map((line, i) => ({ low: i === 8 || i >= 11, v: [`${i + 1}.`, "", ...line.split("|")] }));

const cell = "border-r border-b border-[#d0d7e5] p-0";

function RowHead({ n, on }: { n: number; on?: boolean }) {
  return (
    <th
      scope="row"
      className={`border-r border-b p-0 pt-[3px] text-center text-[12px] leading-none font-normal text-[#2b4a6f] ${
        on ? "border-[#f29536] bg-[#ffd58d]" : "border-[#9eb6ce] bg-[#e4ecf7]"
      }`}
    >
      {n}
    </th>
  );
}

function Blank({ count, className = "" }: { count: number; className?: string }) {
  return (
    <>
      {Array.from({ length: count }, (_, i) => (
        <td key={i} className={`${cell} ${className}`} />
      ))}
    </>
  );
}

function Sheet() {
  return (
    <div className="relative min-w-0 flex-1 overflow-hidden bg-white">
      <table className="w-full table-fixed border-separate border-spacing-0 font-[Lato,sans-serif] text-[12px] leading-none text-black">
        <colgroup>
          {COL_W.map((w, i) => (
            <col key={i} className={w} />
          ))}
          <col />
        </colgroup>
        <thead>
          <tr className="h-[17px] text-[12px] text-[#2b4a6f]">
            <th aria-label="Select all" className="border-r border-b border-[#9eb6ce] bg-[#a9c4e9] p-0">
              <span className="flex justify-end pt-[3px] pr-1">
                <Svg w={9} h={9}><path d="M9 0v9H0z" fill="#e9f0fa" /></Svg>
              </span>
            </th>
            {COLS.map((c, i) => (
              <th
                key={c}
                scope="col"
                className={`border-r border-b p-0 pt-[2px] font-normal ${
                  i < 7 ? "border-[#f29536] bg-linear-to-b from-[#f9d99f] to-[#f1c15f]" : "border-[#9eb6ce] bg-linear-to-b from-[#f6f9fd] to-[#d5dfec]"
                }`}
              >
                {c}
              </th>
            ))}
            <th className="border-b border-[#9eb6ce] bg-linear-to-b from-[#f6f9fd] to-[#d5dfec] p-0" />
          </tr>
        </thead>
        <tbody>
          <tr className="h-[23px]">
            <RowHead n={1} on />
            <td colSpan={7} className="relative border-r border-b border-white p-0 pb-px pl-[2px] text-[13px] font-bold">
              Vaša firma - Lager lista 1
              <span className="absolute top-0 right-[-2px] bottom-0 left-0 border border-r-[3px] border-black" />
              <span className="absolute right-[-4px] bottom-[-4px] z-10 h-[6px] w-[6px] border border-white bg-black" />
            </td>
            <td className={cell} />
            <td colSpan={2} rowSpan={2} className="relative p-0 pr-[2px] pb-[2px] text-center leading-[18px] font-bold">
              Datum: 24.12.22.god.
              <br />
              Vreme: 19:09 h
              <span className="absolute top-0 -right-px -bottom-px -left-px border-[3px] border-t-0 border-double border-black" />
            </td>
            <Blank count={7} />
            <td className="border-b border-[#d0d7e5] p-0" />
          </tr>
          <tr className="h-[23px]">
            <RowHead n={2} />
            <td colSpan={7} className="border-t border-r border-b border-t-black border-r-[#d0d7e5] border-b-black p-0 pb-[2px] pl-[2px] font-bold">
              0 - SVI MAGACINI!
            </td>
            <td className={cell} />
            <Blank count={7} />
            <td className="border-b border-[#d0d7e5] p-0" />
          </tr>
          <tr className="h-[7px]">
            <th scope="row" className="border-r border-b border-[#9eb6ce] bg-[#e4ecf7] p-0 font-normal text-[#2b4a6f]">
              <span className="flex h-[6px] items-end justify-center overflow-hidden">3</span>
            </th>
            <Blank count={18} />
          </tr>
          <tr className="h-[22px]">
            <RowHead n={4} />
            <td colSpan={10} className={`${cell} pb-px pl-[2px] text-[11px] font-bold`}>
              UREDJAJI, REZERVNI DELOVI, POTROSNI MATERIJAL :::
            </td>
            <Blank count={8} />
          </tr>
          <tr className="h-[13px]">
            <th scope="row" className="border-r border-b border-[#9eb6ce] bg-[#e4ecf7] p-0 font-normal text-[#2b4a6f]">5</th>
            <Blank count={16} className="border-b-black" />
            <Blank count={2} />
          </tr>
          <tr className="h-[26px]">
            <RowHead n={6} />
            {HEADINGS.map((h) => (
              <td key={h} className="border-r border-b border-black p-0 text-center font-bold whitespace-nowrap">{h}</td>
            ))}
            <Blank count={2} />
          </tr>
          {DATA.map(({ low, v }, r) => {
            const nextLow = DATA[r + 1]?.low;
            return (
              <tr key={r} className="h-[21px]">
                <RowHead n={r + 7} />
                {v.map((t, c) => {
                  const flagCol = c === 1 || c === 11;
                  const red = low && flagCol;
                  const align = c < 4 ? "text-center" : c < 9 ? "pl-[2px] text-left" : "pr-[2px] text-right";
                  return (
                    <td
                      key={c}
                      className={`relative overflow-hidden border-r border-b pt-[2px] pb-0 whitespace-nowrap ${c < 4 ? "px-0" : c < 9 ? "pr-0" : "pl-0"} ${align} ${
                        red || (low && (c === 0 || c === 10)) ? "border-r-[#f00]" : "border-r-[#d0d7e5]"
                      } ${red || (nextLow && flagCol) ? "border-b-[#f00]" : "border-b-[#d0d7e5]"} ${red ? "bg-[#f00]" : ""} ${
                        c === 11 ? "font-bold" : ""
                      } ${c === 12 ? "text-[#1f3864]" : ""}`}
                    >
                      {t}
                      {c === 0 && (
                        <span className="absolute top-0 left-0">
                          <Svg w={5} h={5}><path d="M0 0h5L0 5z" fill="#0a800a" /></Svg>
                        </span>
                      )}
                    </td>
                  );
                })}
                <Blank count={2} />
              </tr>
            );
          })}
        </tbody>
      </table>
      <div className="pointer-events-none absolute top-[17px] bottom-0 left-[810px] border-l border-dashed border-black" />
    </div>
  );
}

function VScroll() {
  return (
    <div className="flex w-4 shrink-0 flex-col items-center bg-linear-to-r from-[#6f93c2] to-[#86a5cf]">
      <div className="flex h-[9px] w-full items-center justify-center border border-[#7a99c4] bg-white">
        <span className="h-px w-2 bg-[#5279b0]" />
      </div>
      <button aria-label="Scroll up" className="flex h-4 items-center"><Svg w={9} h={5}><path d="M0 5 4.500 0 9 5z" fill="#45556f" /></Svg></button>
      <div className="flex h-[205px] w-[15px] flex-col items-center justify-center gap-px rounded-[2px] border border-[#5d7496] bg-linear-to-r from-[#f2f5fa] via-[#d9e0ea] to-[#a9b6c9]">
        {[0, 1, 2, 3].map((i) => (
          <span key={i} className="h-px w-2 bg-[#6b7685]" />
        ))}
      </div>
      <button aria-label="Scroll down" className="mt-auto flex h-4 items-center"><Svg w={9} h={5}><path d="M0 0 4.500 5 9 0z" fill="#45556f" /></Svg></button>
    </div>
  );
}

function BottomBar() {
  const nav: [string, string][] = [
    ["First sheet", "M1 1v7M8 1v7L3.500 4.500z"],
    ["Previous sheet", "M7 .5v8L3 4.500z"],
    ["Next sheet", "M3 .5v8L7 4.500z"],
    ["Last sheet", "M2 1v7l4.500-3.500zM9 1v7"],
  ];
  return (
    <div className="flex h-4 shrink-0 border-b border-[#4f77aa] bg-linear-to-b from-[#8aa9d2] to-[#a0bade]">
      <div className="flex min-w-0 flex-[808_1_0%]">
        <div className="flex w-[63px] shrink-0 items-center border-r border-[#86a4cf] bg-[#c5dbf6] pl-[3px]">
          {nav.map(([label, d]) => (
            <button key={label} aria-label={label} className="flex w-[14px] justify-center">
              <Svg w={10} h={9}><path d={d} fill="#17428e" stroke="#17428e" strokeWidth=".8" /></Svg>
            </button>
          ))}
        </div>
        <button className="flex w-[76px] items-center justify-center bg-linear-to-b from-white to-[#dfeafa] pt-[2px] font-[Lato,sans-serif] text-[13px] leading-none font-bold text-[#1d3f7f] [clip-path:polygon(0_0,100%_0,93%_100%,6%_100%)]">
          Lager1filt
        </button>
        <button aria-label="Insert worksheet" className="-ml-1 block">
          <Svg w={46} h={15}>
            <path d="M7 0h38q-5 4-9 10-3 4.500-6 4.500H0Q3 10 7 0z" fill="#cfe0f6" stroke="#8aa8d3" />
            <path d="M17.500 4.500h9v8h-3l-1-2v2h-5z" fill="#fff" stroke="#6c80a3" />
            <path d="m15.500 0 1 2.500 2.500-1-1 2.500 2 1-2.500 1 .5 2.500-2.500-1.500-2 1.500v-2.500L11 5l2-1.500-.5-2 2.500 1z" fill="#f0ac2e" />
          </Svg>
        </button>
      </div>
      <div className="flex min-w-0 flex-[538_1_0%] items-center bg-[#7c9bc8]">
        <span className="flex h-full w-[7px] items-center justify-center border border-[#7a99c4] bg-white"><span className="h-2 w-px bg-[#5279b0]" /></span>
        <button aria-label="Scroll left" className="flex w-[18px] justify-center"><Svg w={5} h={9}><path d="M5 0v9L0 4.500z" fill="#45556f" /></Svg></button>
        <div className="flex h-full min-w-0 flex-1">
          <div className="flex h-full w-[88%] items-center justify-center gap-px rounded-[2px] border border-[#5d7496] bg-linear-to-b from-[#eef2f8] via-[#d5dce7] to-[#aab8cc]">
            {[0, 1, 2, 3].map((i) => (
              <span key={i} className="h-2 w-px bg-[#6b7685]" />
            ))}
          </div>
        </div>
        <button aria-label="Scroll right" className="flex w-5 justify-center"><Svg w={5} h={9}><path d="M0 0v9l5-4.500z" fill="#45556f" /></Svg></button>
        <span className="flex h-full w-[7px] items-center justify-center border border-[#7a99c4] bg-white"><span className="h-2 w-px bg-[#5279b0]" /></span>
      </div>
      <div className="w-4 shrink-0 bg-[#7397cc]" />
      <div className="w-1 shrink-0 bg-[#b8d2f5]" />
    </div>
  );
}

function StatusBar() {
  const [zoom, setZoom] = useState(90);
  return (
    <footer className="flex h-[22px] shrink-0 items-stretch bg-linear-to-b from-[#d8e7fb] via-[#a9c8f2] to-[#cfe3fd] text-[11px] text-[#15294f]">
      <div className="flex w-[47px] items-center border-r border-[#8aaad6] pl-[7px] shadow-[1px_0_0_#e5f0ff]">Ready</div>
      <div className="flex w-[34px] items-center justify-center border-r border-[#8aaad6] shadow-[1px_0_0_#e5f0ff]">
        <button aria-label="Record macro"><RecordIcon /></button>
      </div>
      <div className="flex-1" />
      <div className="flex items-center border-l border-[#5f86bb] bg-linear-to-b from-[#a5c3ef] via-[#82aae2] to-[#a3c4f2] pr-[5px] pl-[5px] shadow-[inset_1px_0_0_#dbe9fc]">
        <div className="flex h-5 overflow-hidden rounded-[2px] border border-[#7c9cc9] bg-[#b8d0f0]">
          <button aria-label="Normal view" aria-pressed="true" className="flex w-[18px] items-center justify-center bg-linear-to-b from-[#fbc778] to-[#fee693]">
            <Svg w={14} h={12} crisp><rect x="0" y="0" width="14" height="12" fill="#666" /><path d="M1 1h3v2h-3zM5 1h4v2h-4zM10 1h3v2h-3zM1 4h3v3h-3zM5 4h4v3h-4zM10 4h3v3h-3zM1 8h3v3h-3zM5 8h4v3h-4zM10 8h3v3h-3z" fill="#fff" /></Svg>
          </button>
          <button aria-label="Page layout view" className="flex w-[18px] items-center justify-center">
            <Svg w={13} h={13} crisp><rect width="13" height="13" fill="#666" /><rect x="1" y="1" width="11" height="11" fill="#b9bcc2" /><rect x="3" y="2" width="7" height="9" fill="#fff" stroke="#666" /><path d="M5 4.500h3M5 6.500h3M5 8.500h3" stroke="#777" /></Svg>
          </button>
          <button aria-label="Page break preview" className="flex w-[18px] items-center justify-center">
            <Svg w={13} h={13} crisp><rect width="13" height="13" fill="#666" /><rect x="1" y="1" width="11" height="11" fill="#b9bcc2" /><path d="M1 1h4v7h-4zM7 1h4v7h-4z" fill="#fff" /><path d="M5.500 1v7.500M1 8.500h5M7 8.500h5M7.500 1v7.500" stroke="#666" /></Svg>
          </button>
        </div>
        <span className="w-10 pl-2">{zoom}%</span>
        <button aria-label="Zoom out" onClick={() => setZoom(Math.max(10, zoom - 10))}>
          <Svg w={16} h={16}><circle cx="8" cy="8" r="7" fill="#e9f1fb" stroke="#4c6c9c" /><path d="M4 8h8" stroke="#3f4f69" strokeWidth="2" /></Svg>
        </button>
        <input
          type="range"
          aria-label="Zoom"
          min={10}
          max={190}
          value={zoom}
          onChange={(e) => setZoom(Number(e.target.value))}
          className="h-4 w-[101px] appearance-none bg-[linear-gradient(#456ca8,#456ca8)] bg-[length:100%_1px] bg-center bg-no-repeat [&::-webkit-slider-thumb]:h-[13px] [&::-webkit-slider-thumb]:w-[9px] [&::-webkit-slider-thumb]:appearance-none [&::-webkit-slider-thumb]:rounded-b-[5px] [&::-webkit-slider-thumb]:border [&::-webkit-slider-thumb]:border-[#4c6c9c] [&::-webkit-slider-thumb]:bg-[#dce8f8]"
        />
        <button aria-label="Zoom in" onClick={() => setZoom(Math.min(190, zoom + 10))}>
          <Svg w={16} h={16}><circle cx="8" cy="8" r="7" fill="#e9f1fb" stroke="#4c6c9c" /><path d="M4 8h8M8 4v8" stroke="#3f4f69" strokeWidth="2" /></Svg>
        </button>
      </div>
    </footer>
  );
}

export default function App() {
  return (
    <div className="flex h-screen flex-col overflow-hidden bg-[#bfdbff] font-['Open_Sans',sans-serif]">
      <TitleBar />
      <TabRow />
      <Ribbon />
      <FormulaBar />
      <div className="h-1 shrink-0 border-b border-[#6a93bd] bg-[#dfeafa]" />
      <main className="flex min-h-0 flex-1">
        <Sheet />
        <VScroll />
        <div className="w-1 shrink-0 bg-[#b8d2f5]" />
      </main>
      <BottomBar />
      <StatusBar />
    </div>
  );
}
